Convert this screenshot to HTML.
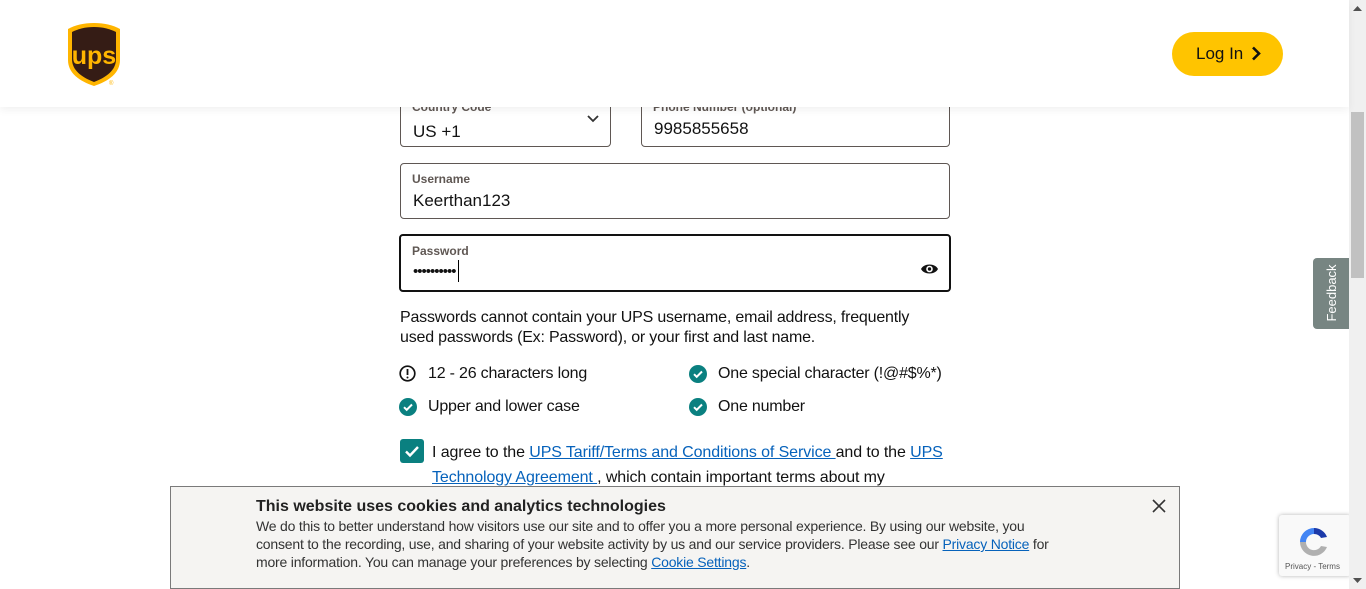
<!DOCTYPE html>
<html><head><meta charset="utf-8"><style>
*{box-sizing:border-box;margin:0;padding:0}
body{width:1366px;height:589px;overflow:hidden;background:#fff;font-family:"Liberation Sans",sans-serif;color:#121212;position:relative}
.abs{position:absolute}
.header{left:0;top:0;width:1349px;height:107px;background:#fff;box-shadow:0 3px 8px rgba(0,0,0,.06);z-index:5}
.login{left:1172px;top:32px;width:111px;height:44px;border-radius:22px;background:#ffc400;font-size:17px;line-height:44px;padding-left:24px;color:#121212}
.field{border:1px solid #5f5753;border-radius:4px;background:#fff}
.lbl{font-size:12px;color:#5f5753;font-weight:bold;position:absolute;left:11px}
.val{font-size:17px;position:absolute;left:12px}
.txt{font-size:16px;line-height:20px;letter-spacing:-0.2px;white-space:nowrap}
.req{font-size:16px;letter-spacing:-0.2px}
.ck{width:18px;height:18px;border-radius:50%;background:#0a8080;position:absolute}
a{color:#0662bb}
.cookie{left:170px;top:486px;width:1010px;height:103px;background:#f5f4f2;border:1px solid #7a7a7a;z-index:10}
.sb{left:1349px;top:0;width:17px;height:589px;background:#f0f0f0}
</style></head><body>
<div class="abs header">
<svg class="abs" style="left:67px;top:22px" width="55" height="65" viewBox="0 0 55 65">
<path d="M27 1C17 1 8 3 1 7v31c0 13 11 21 26 26 15-5 26-13 26-26V7C46 3 37 1 27 1z" fill="#ffb500"/>
<path d="M27 5C18 5 11 7 5 10v27c0 11 9 18 22 23 13-5 22-12 22-23V10C43 7 36 5 27 5z" fill="#351c15"/>
<text x="27" y="42" text-anchor="middle" font-family="Liberation Sans" font-weight="bold" font-size="25" fill="#ffb500">ups</text>
<text x="42" y="63" font-size="6" fill="#ffb500">®</text>
</svg>
<div class="abs login">Log In <svg style="vertical-align:-2px;margin-left:3px" width="10" height="15" viewBox="0 0 10 15"><path d="M2 1.5l6 6-6 6" stroke="#121212" stroke-width="2.6" fill="none"/></svg></div>
</div>
<div class="abs field" style="left:400px;top:90px;width:211px;height:57px"><div class="lbl" style="top:9px">Country Code</div><div class="val" style="top:31px;font-size:17px">US +1</div>
<svg class="abs" style="left:186px;top:24px" width="12" height="8" viewBox="0 0 12 8"><path d="M1 1l5 5 5-5" stroke="#333" stroke-width="1.8" fill="none"/></svg></div>
<div class="abs field" style="left:641px;top:90px;width:309px;height:57px"><div class="lbl" style="top:9px">Phone Number (optional)</div><div class="val" style="top:28px">9985855658</div></div>
<div class="abs field" style="left:400px;top:163px;width:550px;height:56px"><div class="lbl" style="top:8px">Username</div><div class="val" style="top:27px">Keerthan123</div></div>
<div class="abs field" style="left:399px;top:234px;width:552px;height:58px;border:2px solid #121212"><div class="lbl" style="top:8px">Password</div><div class="val" style="top:24px;letter-spacing:-1px;font-size:15px">••••••••••<span style="display:inline-block;width:1px;height:22px;background:#000;vertical-align:-6px;margin-left:2px"></span></div>
<svg class="abs" style="left:519px;top:26px" width="19" height="14" viewBox="0 0 19 14"><path d="M1 7c3-6 14-6 17 0-3 6-14 6-17 0z" fill="#121212"/><circle cx="9.5" cy="7" r="3.3" fill="#fff"/><circle cx="9.5" cy="7" r="1.7" fill="#121212"/></svg></div>
<div class="abs txt" style="left:400px;top:308px">Passwords cannot contain your UPS username, email address, frequently<br>used passwords (Ex: Password), or your first and last name.</div>
<svg class="abs" style="left:399px;top:365px" width="17" height="17" viewBox="0 0 17 17"><circle cx="8.5" cy="8.5" r="7.3" fill="none" stroke="#121212" stroke-width="1.7"/><path d="M8.5 4v6" stroke="#121212" stroke-width="1.8"/><circle cx="8.5" cy="12.5" r="1" fill="#121212"/></svg>
<div class="abs req" style="left:428px;top:365px">12 - 26 characters long</div>
<div class="ck" style="left:689px;top:365px"></div><div class="abs req" style="left:718px;top:365px">One special character (!@#$%*)</div>
<div class="ck" style="left:399px;top:398px"></div><div class="abs req" style="left:428px;top:398px">Upper and lower case</div>
<div class="ck" style="left:689px;top:398px"></div><div class="abs req" style="left:718px;top:398px">One number</div>
<svg class="abs" style="top:365px;left:689px" width="18" height="18" viewBox="0 0 18 18"><path d="M5 9.2l2.7 2.6L13 6.5" stroke="#fff" stroke-width="2" fill="none"/></svg>
<svg class="abs" style="left:399px;top:398px" width="18" height="18" viewBox="0 0 18 18"><path d="M5 9.2l2.7 2.6L13 6.5" stroke="#fff" stroke-width="2" fill="none"/></svg>
<svg class="abs" style="left:689px;top:398px" width="18" height="18" viewBox="0 0 18 18"><path d="M5 9.2l2.7 2.6L13 6.5" stroke="#fff" stroke-width="2" fill="none"/></svg>
<div class="abs" style="left:400px;top:439px;width:24px;height:24px;border-radius:3px;background:#0a8080"><svg width="24" height="24" viewBox="0 0 24 24"><path d="M6 12.5l4 4 8-8.5" stroke="#fff" stroke-width="2.4" fill="none"/></svg></div>
<div class="abs" style="left:432px;top:440px;font-size:16px;line-height:25px;letter-spacing:-0.1px;white-space:nowrap">I agree to the <a href="#">UPS Tariff/Terms and Conditions of Service </a>and to the <a href="#">UPS</a><br><a href="#">Technology Agreement </a>, which contain important terms about my</div>
<div class="abs cookie">
<div class="abs" style="left:85px;top:11px;font-size:16px;font-weight:bold;color:#222">This website uses cookies and analytics technologies</div>
<div class="abs" style="left:85px;top:30px;font-size:14px;line-height:18px;color:#333;letter-spacing:-0.2px;white-space:nowrap">We do this to better understand how visitors use our site and to offer you a more personal experience. By using our website, you<br>consent to the recording, use, and sharing of your website activity by us and our service providers. Please see our <a href="#">Privacy Notice</a> for<br>more information. You can manage your preferences by selecting <a href="#">Cookie Settings</a>.</div>
<svg class="abs" style="left:981px;top:12px" width="14" height="14" viewBox="0 0 14 14"><path d="M1 1l12 12M13 1L1 13" stroke="#333" stroke-width="1.6"/></svg>
</div>
<div class="abs" style="left:1313px;top:258px;width:36px;height:71px;background:#778582;border-radius:4px 0 0 4px"><div style="position:absolute;left:11px;top:65px;transform:rotate(-90deg);transform-origin:0 0;color:#fff;font-size:13px;width:60px;text-align:center;line-height:16px">Feedback</div></div>
<div class="abs" style="left:1279px;top:515px;width:72px;height:61px;background:#f9f9f9;border-radius:3px;box-shadow:0 0 4px rgba(0,0,0,.3)">
<svg class="abs" style="left:17px;top:9px" width="36" height="36" viewBox="0 0 36 36"><path d="M18 4a14 14 0 0 1 13 9l-6 1a8 8 0 0 0-7-4z" fill="#1c3aa9"/><path d="M4 18A14 14 0 0 1 18 4v6a8 8 0 0 0-8 8z" fill="#4285f4"/><path d="M4 18a14 14 0 0 0 27 5l-6-1a8 8 0 0 1-15-4z" fill="#b0b0b0"/></svg>
<div class="abs" style="left:6px;top:47px;font-size:8px;color:#555">Privacy - Terms</div></div>
<div class="abs sb"><div class="abs" style="left:2px;top:112px;width:13px;height:166px;background:#c1c1c1"></div>
<svg class="abs" style="left:4px;top:6px" width="9" height="5"><path d="M0 5L4.5 0 9 5z" fill="#505050"/></svg>
<svg class="abs" style="left:4px;top:578px" width="9" height="5"><path d="M0 0L4.5 5 9 0z" fill="#505050"/></svg></div>
</body></html>
